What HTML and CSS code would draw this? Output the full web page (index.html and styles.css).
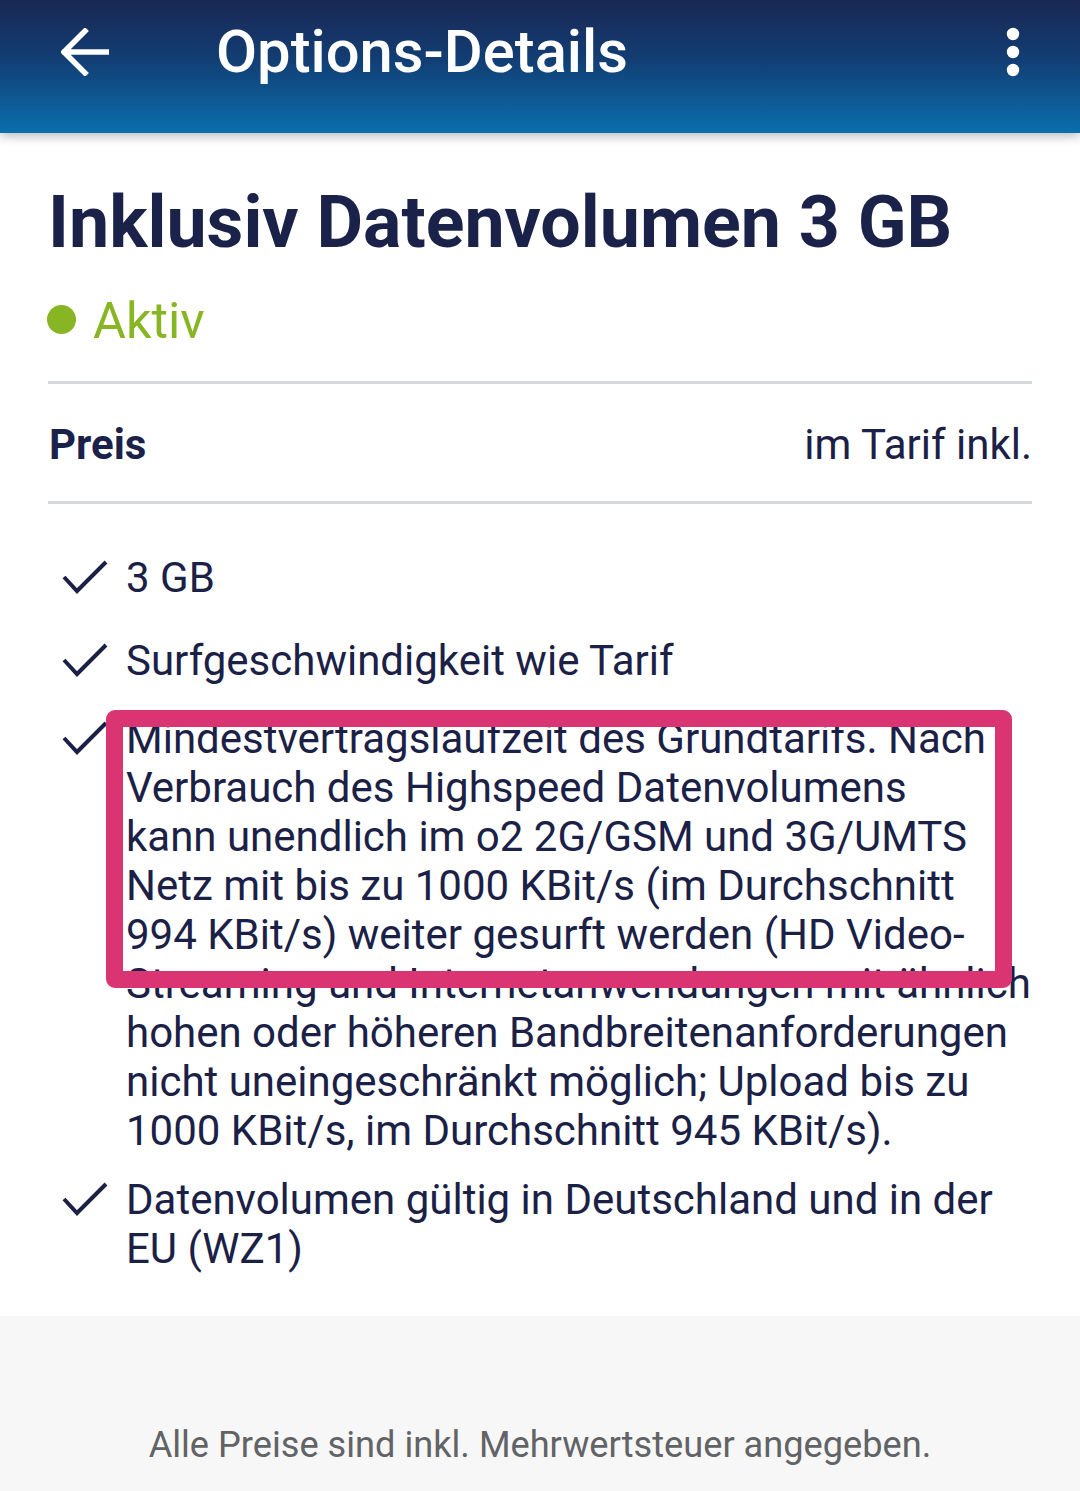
FILE: index.html
```html
<!DOCTYPE html>
<html lang="de">
<head>
<meta charset="utf-8">
<title>Options-Details</title>
<link rel="stylesheet" href="styles.css">
</head>
<body>
<header class="appbar">
  <div class="appbar-row">
    <svg class="back" width="48" height="48" viewBox="0 0 48 48" aria-hidden="true">
      <path d="M46 24H4M24 3L3 24l21 21" fill="none" stroke="#fff" stroke-width="5.5" stroke-linecap="square" stroke-linejoin="miter"/>
    </svg>
    <h1 class="appbar-title">Options-Details</h1>
    <svg class="more" width="14" height="52" viewBox="0 0 14 52" aria-hidden="true">
      <circle cx="7" cy="8" r="6.2" fill="#fff"/>
      <circle cx="7" cy="26" r="6.2" fill="#fff"/>
      <circle cx="7" cy="44" r="6.2" fill="#fff"/>
    </svg>
  </div>
</header>

<main class="content">
  <h2 class="option-title">Inklusiv Datenvolumen 3 GB</h2>
  <div class="status"><span class="status-dot"></span><span class="status-text">Aktiv</span></div>
  <div class="price-row">
    <span class="price-label">Preis</span>
    <span class="price-value">im Tarif inkl.</span>
  </div>
  <ul class="features">
    <li class="feature gap-a">
      <svg class="check" width="46" height="49" viewBox="0 0 46 49" aria-hidden="true"><path d="M2 24l13 14L44 9" fill="none" stroke="#1b2146" stroke-width="4"/></svg>
      <span class="feature-text">3 GB</span>
    </li>
    <li class="feature gap-b">
      <svg class="check" width="46" height="49" viewBox="0 0 46 49" aria-hidden="true"><path d="M2 24l13 14L44 9" fill="none" stroke="#1b2146" stroke-width="4"/></svg>
      <span class="feature-text">Surfgeschwindigkeit wie Tarif</span>
    </li>
    <li class="feature gap-c">
      <svg class="check" width="46" height="49" viewBox="0 0 46 49" aria-hidden="true"><path d="M2 24l13 14L44 9" fill="none" stroke="#1b2146" stroke-width="4"/></svg>
      <span class="feature-text nowrap">Mindestvertragslaufzeit des Grundtarifs. Nach<br>Verbrauch des Highspeed Datenvolumens<br>kann unendlich im o2 2G/GSM und 3G/UMTS<br>Netz mit bis zu 1000 KBit/s (im Durchschnitt<br>994 KBit/s) weiter gesurft werden (HD Video-<br>Streaming und Internetanwendungen mit ähnlich<br>hohen oder höheren Bandbreitenanforderungen<br>nicht uneingeschränkt möglich; Upload bis zu<br>1000 KBit/s, im Durchschnitt 945 KBit/s).</span>
    </li>
    <li class="feature">
      <svg class="check" width="46" height="49" viewBox="0 0 46 49" aria-hidden="true"><path d="M2 24l13 14L44 9" fill="none" stroke="#1b2146" stroke-width="4"/></svg>
      <span class="feature-text">Datenvolumen gültig in Deutschland und in der<br>EU (WZ1)</span>
    </li>
  </ul>
</main>

<footer class="footer">
  <p class="footer-text">Alle Preise sind inkl. Mehrwertsteuer angegeben.</p>
</footer>

<div class="highlight" aria-hidden="true"></div>
</body>
</html>
```

FILE: styles.css
```css
* { box-sizing: border-box; }

html, body {
  margin: 0;
  padding: 0;
  background: #ffffff;
}

body {
  position: relative;
  width: 1080px;
  min-height: 1491px;
  font-family: Roboto, "Noto Sans", "Liberation Sans", sans-serif;
  color: #1b2146;
  display: flex;
  flex-direction: column;
  overflow: hidden;
}

/* App bar */
.appbar {
  height: 133px;
  background: linear-gradient(180deg, #1a2753 0%, #123e74 45%, #0a6fad 100%);
  box-shadow: 0 3px 10px rgba(0, 0, 0, 0.28);
  position: relative;
  z-index: 1;
}

.appbar-row {
  height: 104px;
  display: flex;
  align-items: center;
  padding-left: 61px;
  padding-right: 60px;
}

.back { flex: none; }

.appbar-title {
  margin: 0 0 0 107px;
  font-size: 59.7px;
  font-weight: 500;
  color: #ffffff;
  flex: 1;
  line-height: normal;
}

.more { flex: none; }

/* Content */
.content {
  padding: 0 48px 43px;
}

.option-title {
  margin: 47px 0 0;
  font-size: 71.7px;
  font-weight: 700;
  color: #1b2249;
  line-height: normal;
  letter-spacing: 0;
}

.status {
  margin-top: 26px;
  display: flex;
  align-items: center;
  gap: 17px;
}

.status-dot {
  width: 29px;
  height: 29px;
  border-radius: 50%;
  background: #88b524;
  margin-left: -1px;
  margin-top: -3px;
}

.status-text {
  font-size: 50.5px;
  color: #88b524;
  line-height: normal;
}

.price-row {
  margin-top: 31px;
  border-top: 3px solid #d6d9db;
  border-bottom: 3px solid #d6d9db;
  padding: 36px 0 32px 1px;
  display: flex;
  justify-content: space-between;
  align-items: baseline;
  font-size: 42px;
  line-height: 49px;
}

.price-label {
  font-weight: 700;
  color: #1b2249;
}

.price-value {
  color: #1b2146;
}

.features {
  list-style: none;
  margin: 0;
  padding: 49px 0 0 14px;
  display: flex;
  flex-direction: column;
  gap: 20px;
}

.feature {
  display: flex;
  align-items: flex-start;
  gap: 18px;
  font-size: 42px;
  line-height: 49px;
}

.feature.gap-a { margin-bottom: 14px; }
.feature.gap-b { margin-bottom: 9px; }

.check {
  flex: none;
  margin-top: 0;
}

.feature-text { flex: 1; }
.nowrap { white-space: nowrap; }

/* Footer */
.footer {
  flex: 1;
  background: #f7f7f7;
  padding-top: 107px;
  min-height: 175px;
}

.footer-text {
  margin: 0;
  text-align: center;
  font-size: 36.2px;
  color: #616366;
  line-height: normal;
}

/* Annotation overlay */
.highlight {
  position: absolute;
  left: 106px;
  top: 710px;
  width: 906px;
  height: 278px;
  border: 17px solid #da3472;
  border-radius: 9px;
  pointer-events: none;
}
```
